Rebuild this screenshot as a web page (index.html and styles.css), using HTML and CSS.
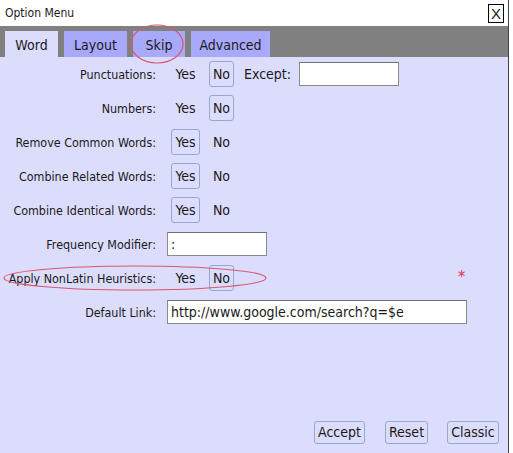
FILE: index.html
```html
<!DOCTYPE html>
<html>
<head>
<meta charset="utf-8">
<link rel="stylesheet" href="styles.css">
</head>
<body>
<div class="window">
  <div class="titlebar">
    <span class="title">Option Menu</span>
    <span class="close">X</span>
  </div>
  <div class="tabs">
    <div class="tab active t-word">Word</div>
    <div class="tab t-layout">Layout</div>
    <div class="tab t-skip">Skip</div>
    <div class="tab t-adv">Advanced</div>
  </div>
  <div class="content">
    <div class="row">
      <div class="label">Punctuations:</div>
      <div class="ctrls">
        <span class="opt yes">Yes</span><span class="opt no sel">No</span>
        <span class="except">Except:</span><span class="field small"></span>
      </div>
    </div>
    <div class="row">
      <div class="label">Numbers:</div>
      <div class="ctrls"><span class="opt yes">Yes</span><span class="opt no sel">No</span></div>
    </div>
    <div class="row">
      <div class="label">Remove Common Words:</div>
      <div class="ctrls"><span class="opt yes sel">Yes</span><span class="opt no">No</span></div>
    </div>
    <div class="row">
      <div class="label">Combine Related Words:</div>
      <div class="ctrls"><span class="opt yes sel">Yes</span><span class="opt no">No</span></div>
    </div>
    <div class="row">
      <div class="label">Combine Identical Words:</div>
      <div class="ctrls"><span class="opt yes sel">Yes</span><span class="opt no">No</span></div>
    </div>
    <div class="row">
      <div class="label">Frequency Modifier:</div>
      <div class="ctrls flush"><span class="field small">:</span></div>
    </div>
    <div class="row">
      <div class="label">Apply NonLatin Heuristics:</div>
      <div class="ctrls"><span class="opt yes">Yes</span><span class="opt no sel">No</span></div>
      <span class="star">*</span>
    </div>
    <div class="row">
      <div class="label">Default Link:</div>
      <div class="ctrls flush"><span class="field wide">http://www.google.com/search?q=$e</span></div>
    </div>
    <div class="buttons">
      <span class="btn accept">Accept</span>
      <span class="btn reset">Reset</span>
      <span class="btn classic">Classic</span>
    </div>
  </div>
  <svg class="marks" width="509" height="453" viewBox="0 0 509 453">
    <ellipse cx="157" cy="44" rx="26" ry="19" />
    <ellipse cx="135" cy="278" rx="131" ry="12" />
  </svg>
</div>
</body>
</html>
```

FILE: styles.css
```css
html, body {
  margin: 0;
  padding: 0;
  background: #ffffff;
}
body {
  font-family: "DejaVu Sans Condensed", "DejaVu Sans", sans-serif;
  color: #1a1a1a;
}
.window {
  position: relative;
  width: 508px;
  height: 453px;
  border-right: 1px solid #444;
  display: flex;
  flex-direction: column;
  background: #dcdcfd;
}
.titlebar {
  height: 26px;
  flex: none;
  background: #ffffff;
  display: flex;
  align-items: center;
  justify-content: space-between;
  padding: 0 4px 0 5px;
}
.title {
  font-size: 12px;
  margin-top: -1px;
}
.close {
  width: 14px;
  height: 17px;
  border: 1px solid #000;
  font-size: 15px;
  line-height: 17px;
  text-align: center;
  font-family: "Liberation Sans", sans-serif;
  margin-top: 1px;
}
.tabs {
  height: 31px;
  flex: none;
  background: #808080;
  display: flex;
  align-items: flex-end;
  gap: 6px;
  padding-left: 5px;
  box-sizing: border-box;
}
.tab {
  height: 26px;
  line-height: 28px;
  font-size: 14px;
  text-align: center;
  background: #a9a9fb;
  color: #1a1a1a;
}
.tab.active {
  background: #dcdcfd;
}
.t-word { width: 53px; }
.t-layout { width: 63px; }
.t-skip { width: 52px; }
.t-adv { width: 79px; }
.content {
  flex: 1;
  display: flex;
  flex-direction: column;
}
.row {
  height: 34px;
  display: flex;
  align-items: center;
}
.label {
  width: 156px;
  text-align: right;
  font-size: 12.4px;
  flex: none;
}
.ctrls {
  display: flex;
  align-items: center;
  margin-left: 15px;
}
.ctrls.flush {
  margin-left: 11px;
}
.opt {
  box-sizing: border-box;
  height: 26px;
  line-height: 25px;
  font-size: 14px;
  text-align: center;
  border: 1px solid transparent;
  border-radius: 3px;
}
.opt.yes {
  width: 29px;
}
.opt.no {
  width: 25px;
  margin-left: 9px;
}
.opt.sel {
  border-color: #93a9cf;
}
.except {
  font-size: 14px;
  margin-left: 10px;
}
.field {
  box-sizing: border-box;
  height: 24px;
  background: #fff;
  border: 1px solid #8a8a8a;
  border-top-color: #707070;
  font-size: 14px;
  line-height: 22px;
  padding-left: 3px;
  white-space: nowrap;
}
.field.small {
  width: 100px;
  margin-left: 8px;
}
.ctrls.flush .field.small {
  margin-left: 0;
}
.field.wide {
  width: 300px;
}
.star {
  color: #e0324f;
  font-size: 16px;
  margin-left: 224px;
  margin-top: -4px;
}
.buttons {
  margin-top: auto;
  margin-bottom: 9px;
  display: flex;
  justify-content: flex-end;
  padding-right: 9px;
}
.btn {
  box-sizing: border-box;
  height: 23px;
  line-height: 21px;
  font-size: 14px;
  text-align: center;
  border: 1px solid #93a9cf;
  border-radius: 3px;
}
.btn.accept { width: 51px; }
.btn.reset { width: 43px; margin-left: 20px; }
.btn.classic { width: 52px; margin-left: 19px; }
.marks {
  position: absolute;
  left: 0;
  top: 0;
  pointer-events: none;
}
.marks ellipse {
  fill: none;
  stroke: #d9566f;
  stroke-width: 1.2;
}
```
